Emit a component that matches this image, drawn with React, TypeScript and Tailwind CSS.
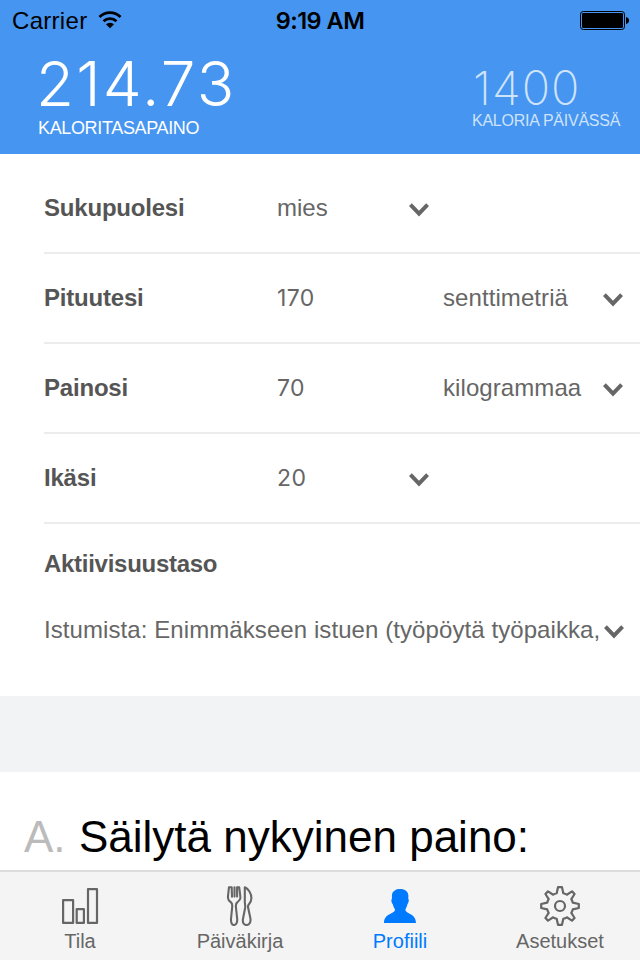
import React from "react";

function Chevron() {
  return (
    <svg className="block shrink-0" width="20" height="14" viewBox="0 0 20 14" fill="none" stroke="#666" strokeWidth="4">
      <path d="M1.4 1.6 10 10.6 18.6 1.6" />
    </svg>
  );
}

function Wifi() {
  return (
    <svg className="block" width="24" height="18" viewBox="0 0 26 19" fill="none" stroke="#000" strokeWidth="3">
      <path d="M1.6 6.3A16.2 16.2 0 0 1 24.4 6.3" />
      <path d="M6 10.9A10 10 0 0 1 20 10.9" />
      <path d="M13 18.4 8.6 14.2A6.2 6.2 0 0 1 17.4 14.2Z" fill="#000" stroke="none" />
    </svg>
  );
}

function Battery() {
  return (
    <svg className="block" width="50" height="20" viewBox="0 0 50 20">
      <rect x="0.5" y="1.5" width="44" height="18" rx="2.8" fill="none" stroke="#000" strokeWidth="1" />
      <rect x="2" y="3" width="41" height="15" rx="1.2" fill="#000" />
      <path d="M46 7C48 7.4 49 8.8 49 10.5S48 13.6 46 14Z" fill="#000" />
    </svg>
  );
}

function BarsIcon() {
  return (
    <svg width="40" height="40" viewBox="0 0 40 40" fill="none" stroke="#666" strokeWidth="2.2" strokeLinejoin="round">
      <rect x="3.1" y="14.1" width="10" height="22.8" />
      <rect x="16.7" y="23.1" width="7.2" height="13.8" />
      <rect x="28" y="3.1" width="9" height="33.8" />
    </svg>
  );
}

function CutleryIcon() {
  return (
    <svg width="40" height="40" viewBox="0 0 40 40" fill="none" stroke="#666" strokeWidth="2.1" strokeLinecap="round" strokeLinejoin="round">
      <path d="M9 1.2C8.6 5 7.9 9 8 12 8 14 9.4 15.2 11 16.4 12 17.3 12.4 19 12.2 21L11 33C10.8 37 12 39 14 39S17.4 37 17.2 33L15.9 21C15.7 19 16.2 17.3 17.2 16.4 19 15 20.4 14 20.4 12 20.4 9 19.6 5 19.2 1.2H17.1V10.6M9 1.2H11.7L12 10.6M14.5 1.2V10.6" />
      <path d="M24.8 1.2C28.4 2.8 31.4 7.5 31.4 12.3 31.4 15 30.3 16.6 28.9 18.2 27.8 19.4 27.8 20.5 28.2 22L30.4 32.3C31 36.5 29.2 39 26.6 39 23.8 39 22.5 36.8 22.9 33.3L25.1 22C25.5 19.6 24.8 18 24.8 15.4Z" />
    </svg>
  );
}

function PersonIcon() {
  return (
    <svg width="40" height="40" viewBox="0 0 40 40" fill="#007aff">
      <path d="M19.8 3C25.2 3 28.6 5.6 28.4 10.4L28.2 12.8C29.3 13.3 28.7 17.2 27.5 18 27 20.2 26.4 21.6 25.5 22.9V24.6C26.6 28 35.8 27.5 36 36.9H4C4.2 27.5 13.8 28 14.9 24.6V22.9C13.9 21.6 13.2 20.2 12.7 18 11.4 17.2 10.9 13.3 12 12.8L11.9 10.4C11.7 7.4 12.8 5.4 14.8 4.4 16.2 3.4 17.8 3 19.8 3Z" />
    </svg>
  );
}

function GearIcon() {
  return (
    <svg width="40" height="40" viewBox="0 0 40 40" fill="none" stroke="#666" strokeWidth="2.2" strokeLinejoin="round">
      <path d="M18 1.2H22L23.3 7.2C24.5 7.5 25.8 8 26.8 8.7L32 5.4 34.6 8 31.3 13.2C32 14.2 32.5 15.5 32.8 16.7L38.8 18V22L32.8 23.3C32.5 24.5 32 25.8 31.3 26.8L34.6 32 32 34.6 26.8 31.3C25.8 32 24.5 32.5 23.3 32.8L22 38.8H18L16.7 32.8C15.5 32.5 14.2 32 13.2 31.3L8 34.6 5.4 32 8.7 26.8C8 25.8 7.5 24.5 7.2 23.3L1.2 22V18L7.2 16.7C7.5 15.5 8 14.2 8.7 13.2L5.4 8 8 5.4 13.2 8.7C14.2 8 15.5 7.5 16.7 7.2Z" />
      <circle cx="20" cy="20" r="5" />
    </svg>
  );
}

const label = "w-[233px] shrink-0 font-bold tracking-[-0.2px] text-[#555]";

function Row({ name, value, unit, digits }: { name: string; value: string; unit?: string; digits?: boolean }) {
  return (
    <div className="ml-11 flex h-[90px] items-center border-b-2 border-[#ececec]">
      <div className={label}>{name}</div>
      <div className={digits ? "w-[132px] shrink-0 font-['Inter'] text-[23px] tracking-[0.4px]" : "w-[132px] shrink-0"}>{value}</div>
      {unit ? (
        <>
          <div className="ml-[34px] w-[160px] shrink-0 whitespace-nowrap tracking-[0.08px]">{unit}</div>
          <div className="pt-1"><Chevron /></div>
        </>
      ) : (
        <div className="pt-1"><Chevron /></div>
      )}
    </div>
  );
}

function Tab({ title, active, children }: { title: string; active?: boolean; children: React.ReactNode }) {
  return (
    <div className={active ? "flex w-40 flex-col items-center text-[#007aff]" : "flex w-40 flex-col items-center text-[#666]"}>
      <div className="mt-[14px] h-10">{children}</div>
      <div className="mt-[3px] text-[20px] leading-6">{title}</div>
    </div>
  );
}

export default function App() {
  return (
    <div className="flex h-[960px] w-[640px] flex-col overflow-hidden bg-white font-['Liberation_Sans',sans-serif] text-[24px] leading-7 text-[#666]">
      <header className="h-[154px] shrink-0 bg-[#4595f1] text-white">
        <div className="grid h-10 grid-cols-3 items-center text-black">
          <div className="flex items-center gap-[11px] pl-3">
            <span className="pt-[2px] tracking-[0.3px]">Carrier</span>
            <Wifi />
          </div>
          <div className="pt-[2px] text-center font-['Inter'] text-[23.5px] font-semibold tracking-[-0.5px]">9:19 AM</div>
          <div className="flex justify-end pr-[10px]"><Battery /></div>
        </div>
        <div className="flex justify-between">
          <div className="pl-[38px]">
            <div className="-ml-[2px] mt-[12px] h-[64px] font-['Inter'] text-[62px] font-light leading-[64px] tracking-[2.2px]">214.73</div>
            <div className="text-[18px] leading-6 tracking-[-0.35px]">KALORITASAPAINO</div>
          </div>
          <div className="w-[168px] text-[#cfe3fb]">
            <div className="ml-px mt-[24px] h-[48px] font-['Inter'] text-[47px] font-extralight leading-[48px] tracking-[1px]">1400</div>
            <div className="pt-px text-[16px] leading-4 tracking-[-0.25px]">KALORIA PÄIVÄSSÄ</div>
          </div>
        </div>
      </header>
      <main className="flex min-h-0 flex-1 flex-col">
        <div className="pt-[10px]">
          <Row name="Sukupuolesi" value="mies" />
          <Row name="Pituutesi" value="170" unit="senttimetriä" digits />
          <Row name="Painosi" value="70" unit="kilogrammaa" digits />
          <Row name="Ikäsi" value="20" digits />
        </div>
        <section className="h-[172px] shrink-0 pl-11 pt-[26px]">
          <div className="font-bold tracking-[-0.28px] text-[#555]">Aktiivisuustaso</div>
          <div className="mt-[38px] flex items-center">
            <div className="w-[560px] shrink-0 whitespace-nowrap tracking-[0.08px]">Istumista: Enimmäkseen istuen (työpöytä työpaikka,</div>
            <div className="pt-1"><Chevron /></div>
          </div>
        </section>
        <div className="h-[76px] shrink-0 bg-[#f2f3f5]" />
        <h1 className="flex pl-6 pt-10 text-[44px] leading-[50px] text-black">
          <span className="w-[55px] text-[#bbb]">A.</span>
          <span>Säilytä nykyinen paino:</span>
        </h1>
      </main>
      <nav className="flex h-[90px] shrink-0 border-t-2 border-[#dcdcdc] bg-[#f4f4f4]">
        <Tab title="Tila"><BarsIcon /></Tab>
        <Tab title="Päiväkirja"><CutleryIcon /></Tab>
        <Tab title="Profiili" active><PersonIcon /></Tab>
        <Tab title="Asetukset"><GearIcon /></Tab>
      </nav>
    </div>
  );
}
